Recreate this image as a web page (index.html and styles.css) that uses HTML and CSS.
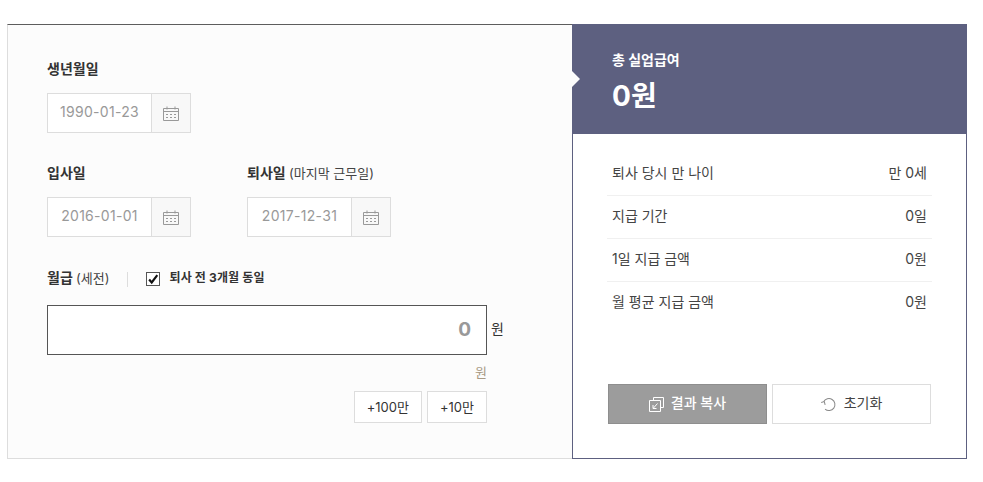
FILE: index.html
```html
<!DOCTYPE html>
<html lang="ko">
<head>
    <meta charset="UTF-8">
    <title>실업급여 계산기</title>
    <link rel="stylesheet" href="styles.css">
</head>
<body>
    <svg class="icon-defs" width="0" height="0">
        <symbol id="calendar" viewBox="0 0 16 15">
            <path d="M.5 2.5h15v12H.5zM.5 5.5h15M4 .5v3M12 .5v3" fill="none" stroke="#999"/>
            <path d="M3 8h2v1H3zM7 8h2v1H7zM11 8h2v1h-2zM3 11h2v1H3zM7 11h2v1H7zM11 11h2v1h-2z" fill="#999"/>
        </symbol>
    </svg>

    <div class="calculator">
        <div class="form-panel">
            <div class="field">
                <div class="label">생년월일</div>
                <div class="date-box">
                    <span class="date-value">1990-01-23</span>
                    <span class="date-icon"><svg width="16" height="15"><use href="#calendar"/></svg></span>
                </div>
            </div>

            <div class="date-row">
                <div class="field">
                    <div class="label">입사일</div>
                    <div class="date-box">
                        <span class="date-value">2016-01-01</span>
                        <span class="date-icon"><svg width="16" height="15"><use href="#calendar"/></svg></span>
                    </div>
                </div>
                <div class="field">
                    <div class="label">퇴사일 <small>(마지막 근무일)</small></div>
                    <div class="date-box">
                        <span class="date-value">2017-12-31</span>
                        <span class="date-icon"><svg width="16" height="15"><use href="#calendar"/></svg></span>
                    </div>
                </div>
            </div>

            <div class="salary-head">
                <div class="label">월급 <small>(세전)</small></div>
                <span class="divider"></span>
                <span class="checkbox">
                    <svg width="14" height="13" viewBox="0 0 14 13"><path d="M2.5 6.5l3 3.5 6.5-8.5" fill="none" stroke="#111" stroke-width="2.5"/></svg>
                </span>
                <span class="check-label">퇴사 전 3개월 동일</span>
            </div>

            <div class="salary-row">
                <div class="salary-input">0</div>
                <span class="unit">원</span>
            </div>
            <div class="salary-hint">원</div>
            <div class="quick-buttons">
                <button class="quick-btn">+100만</button>
                <button class="quick-btn">+10만</button>
            </div>
        </div>

        <div class="result-panel">
            <div class="result-head">
                <div class="result-title">총 실업급여</div>
                <div class="result-total">0원</div>
            </div>
            <ul class="result-list">
                <li><span>퇴사 당시 만 나이</span><span>만 0세</span></li>
                <li><span>지급 기간</span><span>0일</span></li>
                <li><span>1일 지급 금액</span><span>0원</span></li>
                <li><span>월 평균 지급 금액</span><span>0원</span></li>
            </ul>
            <div class="result-buttons">
                <button class="action-btn copy-btn">
                    <svg width="15" height="15" viewBox="0 0 15 15" fill="none" stroke="#fff">
                        <path d="M4.5 3.5v-3h10v10h-3M.5 3.5h11v11H.5zM8.5 6.5l-4 4.5M4 8v3.5h3.5"/>
                    </svg>
                    <span class="btn-text">결과 복사</span>
                </button>
                <button class="action-btn reset-btn">
                    <svg width="16" height="15" viewBox="0 0 16 15" fill="none" stroke="#888">
                        <path d="M3.5 3.5A6 6 0 1 1 3 11M1 3.5h3.2V6.8" transform="rotate(-15 8 7.5)"/>
                    </svg>
                    <span class="btn-text">초기화</span>
                </button>
            </div>
        </div>
    </div>
</body>
</html>
```

FILE: styles.css
```css
* {
    box-sizing: border-box;
}
body {
    margin: 0;
    background-color: #fff;
    color: #333;
    font-family: Inter, "Noto Sans CJK KR", sans-serif;
    font-size: 14px;
}
.icon-defs {
    display: none;
}
.calculator {
    display: flex;
    width: 960px;
    height: 435px;
    margin: 24px 0 0 7px;
}
.form-panel {
    width: 565px;
    padding: 33px 39px 0;
    background-color: #fcfcfc;
    border: 1px solid #ddd;
    border-top: 1px solid #5d5d5d;
    border-right: none;
}
.label {
    height: 22px;
    line-height: 22px;
    font-size: 14px;
    font-weight: 700;
    color: #333;
}
.label small {
    font-size: 13px;
    font-weight: 400;
    color: #444;
}
.field {
    width: 200px;
}
.date-row {
    display: flex;
    margin-top: 29px;
}
.date-box {
    display: flex;
    width: 144px;
    height: 40px;
    margin-top: 13px;
    background-color: #fff;
    border: 1px solid #ddd;
}
.date-value {
    flex: 1;
    line-height: 35px;
    text-align: center;
    font-size: 14px;
    letter-spacing: 0.3px;
    color: #999;
}
.date-icon {
    display: flex;
    align-items: center;
    justify-content: center;
    width: 39px;
    padding-top: 1px;
    background-color: #f8f8f8;
    border-left: 1px solid #ddd;
}
.salary-head {
    display: flex;
    align-items: center;
    height: 22px;
    margin-top: 30px;
}
.divider {
    width: 1px;
    height: 15px;
    margin: 3px 18px 0;
    background-color: #ddd;
}
.checkbox {
    display: flex;
    align-items: center;
    justify-content: center;
    width: 14px;
    height: 14px;
    margin-top: 2px;
    background-color: #fff;
    border: 1px solid #555;
}
.check-label {
    margin: 0 0 4px 9px;
    font-size: 12px;
    font-weight: 700;
    letter-spacing: 0.15px;
    color: #333;
}
.salary-row {
    display: flex;
    align-items: center;
    margin-top: 16px;
}
.salary-input {
    width: 440px;
    height: 50px;
    padding-right: 15px;
    line-height: 47px;
    text-align: right;
    font-size: 19px;
    font-weight: 700;
    color: #999;
    background-color: #fff;
    border: 1px solid #555;
}
.unit {
    margin: 0 0 4px 4px;
    font-size: 14px;
}
.salary-hint {
    width: 440px;
    height: 20px;
    margin-top: 7px;
    line-height: 20px;
    text-align: right;
    font-size: 13px;
    color: #a89a84;
}
.quick-buttons {
    display: flex;
    justify-content: flex-end;
    gap: 5px;
    width: 440px;
    margin-top: 9px;
}
.quick-btn {
    height: 32px;
    padding: 0 12px 2px;
    background-color: #fff;
    border: 1px solid #ddd;
    font-family: inherit;
    font-size: 13px;
    color: #333;
}
.result-panel {
    position: relative;
    display: flex;
    flex-direction: column;
    width: 395px;
    background-color: #fff;
    border: 1px solid #5d6080;
    border-top: none;
}
.result-head {
    position: relative;
    height: 110px;
    margin: 0 -1px;
    padding: 24px 40px 0;
    background-color: #5d6080;
    color: #fff;
}
/* little notch pointing at the form */
.result-head::before {
    content: "";
    position: absolute;
    left: 0;
    top: 47px;
    border: 8px solid transparent;
    border-left-color: #fcfcfc;
    border-right-width: 0;
}
.result-title {
    line-height: 24px;
    font-size: 14px;
    font-weight: 700;
}
.result-total {
    margin-top: 5px;
    line-height: 38px;
    font-size: 28px;
    font-weight: 700;
}
.result-list {
    margin: 19px 34px 0;
    padding: 0;
    list-style: none;
}
.result-list li {
    display: flex;
    justify-content: space-between;
    height: 43px;
    padding: 0 5px;
    line-height: 40px;
    font-size: 14px;
    color: #444;
    border-bottom: 1px solid #f0f0f0;
}
.result-list li:last-child {
    border-bottom: none;
}
.result-buttons {
    display: flex;
    gap: 5px;
    margin: 59px 0 0 35px;
}
.action-btn {
    display: flex;
    align-items: center;
    justify-content: center;
    gap: 7px;
    width: 159px;
    height: 40px;
    font-family: inherit;
    font-size: 14px;
}
.btn-text {
    margin-bottom: 4px;
}
.copy-btn {
    background-color: #9c9c9c;
    border: 1px solid #8e8e8e;
    color: #fff;
    font-weight: 500;
}
.reset-btn {
    background-color: #fff;
    border: 1px solid #ddd;
    color: #444;
}
```
